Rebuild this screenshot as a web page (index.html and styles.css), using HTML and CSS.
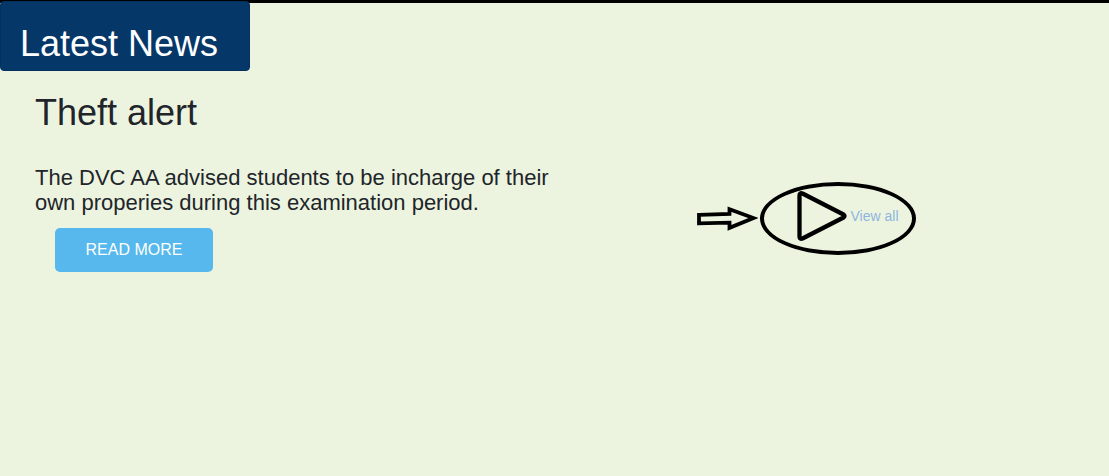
FILE: index.html
```html
<!DOCTYPE html>
<html lang="en">
<head>
  <meta charset="utf-8">
  <meta name="viewport" content="width=device-width, initial-scale=1">
  <title>Latest News</title>
  <link rel="stylesheet" href="styles.css">
</head>
<body>
  <section class="news">
    <h1 class="news-title">Latest News</h1>
    <div class="news-row">
      <article class="story">
        <h2 class="story-title">Theft alert</h2>
        <p class="story-text">The DVC AA advised students to be incharge of their own properies during this examination period.</p>
        <button type="button" class="read-more">READ MORE</button>
      </article>
      <div class="more">
        <svg class="arrow" width="62" height="26" viewBox="0 0 62 26" aria-hidden="true">
          <path d="M3 8.800 33.500 7.800V3.200L57.500 12 33.500 21.800V16.600L3 17.400Z" fill="none" stroke="#000" stroke-width="3.800"/>
        </svg>
        <a class="view-all" href="#all">
          <svg class="play" width="50" height="50" viewBox="0 0 50 50" aria-hidden="true">
            <path d="M2.500 4.500Q2.500 1.500 5.500 2.500L46.500 23.500Q48.500 25 46.500 26.500L5.500 47.500Q2.500 48.500 2.500 45.500Z" fill="none" stroke="#000" stroke-width="4.300" stroke-linejoin="round"/>
          </svg>
          <span>View all</span>
        </a>
      </div>
    </div>
  </section>
</body>
</html>
```

FILE: styles.css
```css
* {
  box-sizing: border-box;
}

body {
  margin: 0;
  min-height: 100vh;
  background: #ecf4e0;
  color: #212529;
  font-family: "Liberation Sans", Arial, sans-serif;
}

.news {
  border-top: 3px solid #000;
}

.news-title {
  width: 250px;
  margin: -2px 0 0;
  padding: 21px 19px 6px;
  border: 1px solid #04305e;
  border-radius: 4px;
  background: #053869;
  color: #fff;
  font-size: 36px;
  font-weight: 400;
  line-height: 41px;
}

.news-row {
  display: grid;
  grid-template-columns: 1fr 1fr;
}

.story {
  padding: 20px 0 0 35px;
}

.story-title {
  margin: 0;
  font-size: 36px;
  font-weight: 400;
  line-height: 43px;
}

.story-text {
  max-width: 520px;
  margin: 31px 0 13px;
  font-size: 22px;
  line-height: 25px;
}

.read-more {
  min-width: 158px;
  height: 44px;
  margin-left: 20px;
  padding: 0 30px;
  border: 0;
  border-radius: 5px;
  background: #56b8ec;
  color: #fff;
  font: 16px "Liberation Sans", Arial, sans-serif;
}

.more {
  display: flex;
  align-items: center;
  align-self: start;
  padding: 111px 0 0 141px;
}

.arrow {
  flex: none;
  margin-right: 2px;
}

.view-all {
  display: flex;
  align-items: center;
  gap: 4px;
  width: 156px;
  height: 73px;
  padding: 0 0 5px 33px;
  border: 4px solid #000;
  border-radius: 50%;
  color: #8fb4de;
  font-size: 14px;
  text-decoration: none;
  white-space: nowrap;
}

.play {
  flex: none;
}
```
